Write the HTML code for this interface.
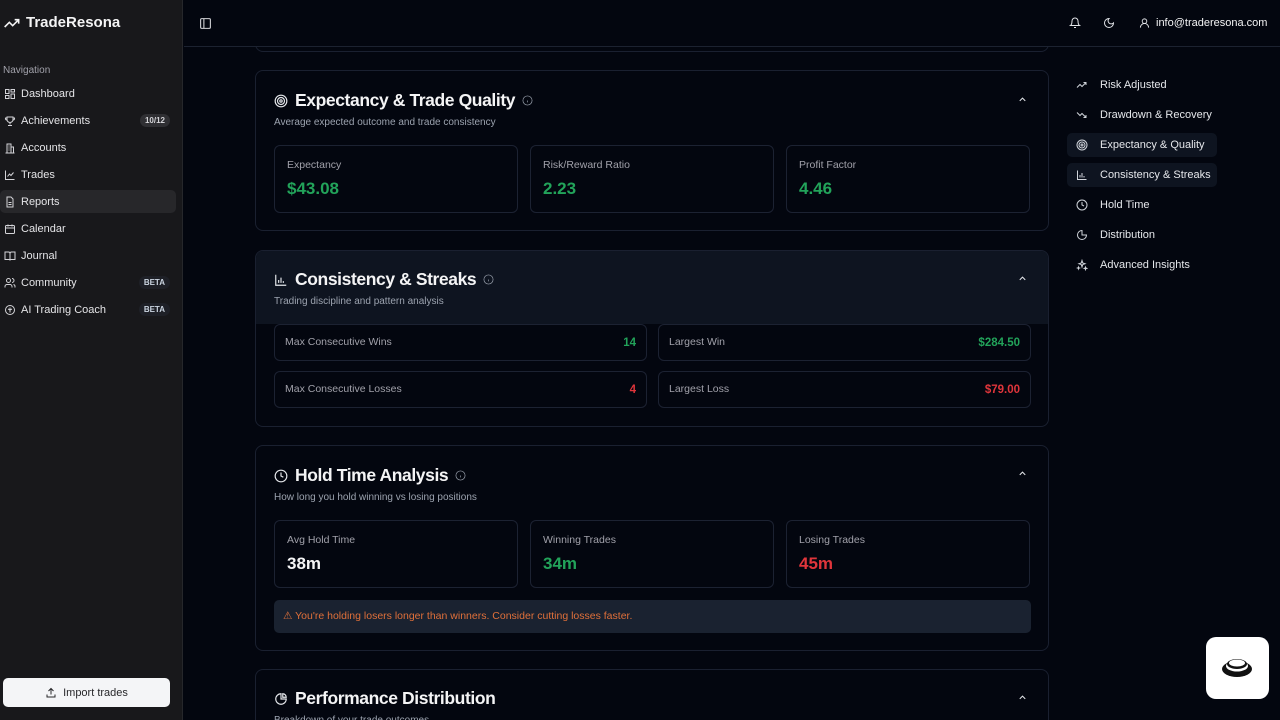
<!DOCTYPE html>
<html><head><meta charset="utf-8"><style>
*{box-sizing:border-box;margin:0;padding:0}
html{width:1280px;height:720px;overflow:hidden}
body{width:1280px;height:720px;overflow:hidden;background:#03060f;font-family:"Liberation Sans",sans-serif;color:#e8eaee;position:relative}
.abs{position:absolute}
.sb{left:0;top:0;width:183px;height:720px;background:#18181b;border-right:1px solid #26272b}
.logo{left:4px;top:14px;font-size:15px;font-weight:bold;color:#f4f4f5;display:flex;align-items:center;gap:6px}
.navh{left:3px;top:65px;font-size:10px;color:#a1a1aa}
.ni{left:0;width:176px;height:23px;display:flex;align-items:center;font-size:11px;color:#e4e4e7;padding-left:4px;border-radius:5px}
.ni svg{width:12px;height:12px;margin-right:5px;stroke:#d4d4d8;fill:none;stroke-width:2}
.ni.act{background:#27272a}
.badge{position:absolute;right:6px;font-size:8px;font-weight:bold;background:#2f2f33;color:#d4d4d8;padding:2px 5px;border-radius:8px}
.beta{background:#1e2027;color:#cbd5e1}
.imp{left:3px;top:678px;width:167px;height:29px;background:#f4f5f7;border-radius:5px;color:#27272a;font-size:11px;display:flex;align-items:center;justify-content:center;gap:6px}
.top{left:184px;top:0;width:1096px;height:47px;border-bottom:1px solid #1c2230;background:#03060f;z-index:2}
.card{left:255px;width:794px;border:1px solid #1a2030;border-radius:8px;background:#03060f}
.title{font-size:17.5px;font-weight:bold;color:#f4f4f5;display:flex;align-items:center;gap:7px;letter-spacing:-.4px}
.sub{font-size:10px;color:#9ca3af;margin-top:6px}
.ic{width:14px;height:14px;stroke:#e5e7eb;fill:none;stroke-width:2}
.info{width:11px;height:11px;stroke:#9ca3af;fill:none;stroke-width:1.5}
.chev{position:absolute;right:20px;width:11px;height:11px;stroke:#e5e7eb;fill:none;stroke-width:2.2}
.st{position:absolute;border:1px solid #1c2232;border-radius:6px;background:#03060f}
.st .l{position:absolute;left:12px;top:13px;font-size:10.5px;color:#a1a1aa}
.st .v{position:absolute;left:12px;top:33px;font-size:17px;font-weight:bold}
.g{color:#22a35a}.r{color:#e0353b}
.row{position:absolute;border:1px solid #1c2232;border-radius:6px;height:37px}
.row .l{position:absolute;left:10px;top:11px;font-size:10.5px;color:#a1a1aa}
.row .v{position:absolute;right:10px;top:12px;font-size:11.5px;font-weight:bold}
.rn{left:1067px;width:150px;height:24px;display:flex;align-items:center;font-size:11px;color:#e5e7eb;padding-left:9px;border-radius:5px}
.rn svg{width:12px;height:12px;stroke:#d1d5db;fill:none;stroke-width:2;margin-right:12px}
.rn.a{background:#0e1420}
</style></head><body>
<div class="abs sb"></div>
<div class="abs logo"><svg width="16" height="12" viewBox="0 0 24 16" fill="none" stroke="#f4f4f5" stroke-width="2.4"><path d="M1 14l7-7 5 5 9-9M16 3h6v6"/></svg>TradeResona</div>
<div class="abs navh">Navigation</div>
<div class="abs ni" style="top:82px"><svg viewBox="0 0 24 24"><rect x="3" y="3" width="7" height="8"/><rect x="14" y="3" width="7" height="5"/><rect x="14" y="12" width="7" height="9"/><rect x="3" y="15" width="7" height="6"/></svg>Dashboard</div>
<div class="abs ni" style="top:109px"><svg viewBox="0 0 24 24"><path d="M6 4h12v5a6 6 0 0 1-12 0zM6 6H3a3 3 0 0 0 3 4M18 6h3a3 3 0 0 1-3 4M12 15v4M8 21h8"/></svg>Achievements<span class="badge">10/12</span></div>
<div class="abs ni" style="top:136px"><svg viewBox="0 0 24 24"><path d="M6 22V4h8v18M14 10h5v12M3 22h18M9 8h2M9 12h2M9 16h2"/></svg>Accounts</div>
<div class="abs ni" style="top:163px"><svg viewBox="0 0 24 24"><path d="M3 3v18h18M7 15l4-5 3 3 5-6"/></svg>Trades</div>
<div class="abs ni act" style="top:190px"><svg viewBox="0 0 24 24"><path d="M14 2H6v20h12V6zM9 13h6M9 17h6"/></svg>Reports</div>
<div class="abs ni" style="top:217px"><svg viewBox="0 0 24 24"><rect x="3" y="5" width="18" height="16" rx="2"/><path d="M3 10h18M8 3v4M16 3v4"/></svg>Calendar</div>
<div class="abs ni" style="top:244px"><svg viewBox="0 0 24 24"><path d="M2 4h7a3 3 0 0 1 3 3v14a2 2 0 0 0-2-2H2zM22 4h-7a3 3 0 0 0-3 3v14a2 2 0 0 1 2-2h8z"/></svg>Journal</div>
<div class="abs ni" style="top:271px"><svg viewBox="0 0 24 24"><circle cx="9" cy="7" r="4"/><path d="M2 21v-2a4 4 0 0 1 4-4h6a4 4 0 0 1 4 4v2M16 3a4 4 0 0 1 0 8M22 21v-2a4 4 0 0 0-3-4"/></svg>Community<span class="badge beta">BETA</span></div>
<div class="abs ni" style="top:298px"><svg viewBox="0 0 24 24"><circle cx="12" cy="12" r="9"/><path d="M12 7v10M8 10l4 2 4-2"/></svg>AI Trading Coach<span class="badge beta">BETA</span></div>
<div class="abs imp"><svg width="12" height="12" viewBox="0 0 24 24" fill="none" stroke="#27272a" stroke-width="2"><path d="M4 15v5h16v-5M12 3v12M7 8l5-5 5 5"/></svg>Import trades</div>

<div class="abs card" style="top:-10px;height:62px"></div>
<div class="abs top"></div>
<svg class="abs" style="left:199px;top:17px;z-index:3" width="13" height="13" viewBox="0 0 24 24" fill="none" stroke="#d4d4d8" stroke-width="2"><rect x="3" y="3" width="18" height="18" rx="2"/><path d="M9 3v18"/></svg>
<svg class="abs" style="left:1069px;top:17px;z-index:3" width="12" height="12" viewBox="0 0 24 24" fill="none" stroke="#e5e7eb" stroke-width="2"><path d="M6 8a6 6 0 0 1 12 0c0 7 3 9 3 9H3s3-2 3-9M10 21h4"/></svg>
<svg class="abs" style="left:1103px;top:17px;z-index:3" width="12" height="12" viewBox="0 0 24 24" fill="none" stroke="#e5e7eb" stroke-width="2"><path d="M12 3a6 6 0 0 0 9 9 9 9 0 1 1-9-9z"/></svg>
<svg class="abs" style="left:1139px;top:17px;z-index:3" width="11" height="12" viewBox="0 0 24 24" fill="none" stroke="#e5e7eb" stroke-width="2"><circle cx="12" cy="8" r="5"/><path d="M3 22a9 9 0 0 1 18 0"/></svg>
<div class="abs" style="left:1156px;top:17px;font-size:11px;color:#f4f4f5;z-index:3">info@traderesona.com</div>

<div class="abs card" style="top:70px;height:161px">
<div class="abs" style="left:18px;top:19px"><div class="title"><svg class="ic" viewBox="0 0 24 24"><circle cx="12" cy="12" r="10"/><circle cx="12" cy="12" r="6"/><circle cx="12" cy="12" r="2"/></svg>Expectancy &amp; Trade Quality<svg class="info" viewBox="0 0 24 24"><circle cx="12" cy="12" r="10"/><path d="M12 16v-4M12 8h0"/></svg></div><div class="sub">Average expected outcome and trade consistency</div></div>
<svg class="chev" style="top:23px" viewBox="0 0 24 24"><path d="M6 15l6-6 6 6"/></svg>
<div class="st" style="left:18px;top:74px;width:244px;height:68px"><div class="l">Expectancy</div><div class="v g">$43.08</div></div>
<div class="st" style="left:274px;top:74px;width:244px;height:68px"><div class="l">Risk/Reward Ratio</div><div class="v g">2.23</div></div>
<div class="st" style="left:530px;top:74px;width:244px;height:68px"><div class="l">Profit Factor</div><div class="v g">4.46</div></div>
</div>

<div class="abs card" style="top:250px;height:177px;overflow:hidden">
<div class="abs" style="left:0;top:0;width:794px;height:73px;background:#0e1420"></div>
<div class="abs" style="left:18px;top:18px"><div class="title"><svg class="ic" viewBox="0 0 24 24"><path d="M3 3v18h18M8 17v-5M12 17V8M16 17v-3"/></svg>Consistency &amp; Streaks<svg class="info" viewBox="0 0 24 24"><circle cx="12" cy="12" r="10"/><path d="M12 16v-4M12 8h0"/></svg></div><div class="sub">Trading discipline and pattern analysis</div></div>
<svg class="chev" style="top:22px" viewBox="0 0 24 24"><path d="M6 15l6-6 6 6"/></svg>
<div class="row" style="left:18px;top:73px;width:373px"><div class="l">Max Consecutive Wins</div><div class="v g">14</div></div>
<div class="row" style="left:402px;top:73px;width:373px"><div class="l">Largest Win</div><div class="v g">$284.50</div></div>
<div class="row" style="left:18px;top:120px;width:373px"><div class="l">Max Consecutive Losses</div><div class="v r">4</div></div>
<div class="row" style="left:402px;top:120px;width:373px"><div class="l">Largest Loss</div><div class="v r">$79.00</div></div>
</div>

<div class="abs card" style="top:445px;height:206px">
<div class="abs" style="left:18px;top:19px"><div class="title"><svg class="ic" viewBox="0 0 24 24"><circle cx="12" cy="12" r="10"/><path d="M12 6v6l4 2"/></svg>Hold Time Analysis<svg class="info" viewBox="0 0 24 24"><circle cx="12" cy="12" r="10"/><path d="M12 16v-4M12 8h0"/></svg></div><div class="sub">How long you hold winning vs losing positions</div></div>
<svg class="chev" style="top:22px" viewBox="0 0 24 24"><path d="M6 15l6-6 6 6"/></svg>
<div class="st" style="left:18px;top:74px;width:244px;height:68px"><div class="l">Avg Hold Time</div><div class="v" style="color:#f4f4f5">38m</div></div>
<div class="st" style="left:274px;top:74px;width:244px;height:68px"><div class="l">Winning Trades</div><div class="v g">34m</div></div>
<div class="st" style="left:530px;top:74px;width:244px;height:68px"><div class="l">Losing Trades</div><div class="v r">45m</div></div>
<div class="abs" style="left:18px;top:154px;width:757px;height:33px;background:#1a2230;border-radius:5px;font-size:10.5px;color:#e0703a;padding:10px 0 0 9px">⚠ You're holding losers longer than winners. Consider cutting losses faster.</div>
</div>

<div class="abs card" style="top:669px;height:51px;border-bottom:none;border-radius:8px 8px 0 0;overflow:hidden">
<div class="abs" style="left:18px;top:18px"><div class="title"><svg class="ic" viewBox="0 0 24 24"><path d="M21 12A9 9 0 1 1 12 3v9z"/><path d="M15 3a6 6 0 0 1 6 6h-6z"/></svg>Performance Distribution</div><div class="sub">Breakdown of your trade outcomes</div></div>
<svg class="chev" style="top:22px" viewBox="0 0 24 24"><path d="M6 15l6-6 6 6"/></svg>
</div>

<div class="abs rn" style="top:73px"><svg viewBox="0 0 24 24"><path d="M2 17l6-6 4 4 8-8M15 7h5v5"/></svg>Risk Adjusted</div>
<div class="abs rn" style="top:103px"><svg viewBox="0 0 24 24"><path d="M2 7l6 6 4-4 8 8M15 17h5v-5"/></svg>Drawdown &amp; Recovery</div>
<div class="abs rn a" style="top:133px"><svg viewBox="0 0 24 24"><circle cx="12" cy="12" r="10"/><circle cx="12" cy="12" r="6"/><circle cx="12" cy="12" r="2"/></svg>Expectancy &amp; Quality</div>
<div class="abs rn a" style="top:163px"><svg viewBox="0 0 24 24"><path d="M3 3v18h18M8 17v-5M12 17V8M16 17v-3"/></svg>Consistency &amp; Streaks</div>
<div class="abs rn" style="top:193px"><svg viewBox="0 0 24 24"><circle cx="12" cy="12" r="10"/><path d="M12 6v6l4 2"/></svg>Hold Time</div>
<div class="abs rn" style="top:223px"><svg viewBox="0 0 24 24"><path d="M21 12A9 9 0 1 1 12 3v9z"/></svg>Distribution</div>
<div class="abs rn" style="top:253px"><svg viewBox="0 0 24 24"><path d="M12 3l1.5 5L18 9.5 13.5 11 12 16l-1.5-5L6 9.5 10.5 8zM19 16l.7 2 2 .7-2 .7-.7 2-.7-2-2-.7 2-.7zM5 16l.5 1.5L7 18l-1.5.5L5 20l-.5-1.5L3 18l1.5-.5z"/></svg>Advanced Insights</div>

<div class="abs" style="left:1206px;top:637px;width:63px;height:62px;background:#fff;border-radius:10px"></div>
<svg class="abs" style="left:1220px;top:654px" width="34" height="26" viewBox="0 0 34 26"><ellipse cx="17" cy="15" rx="15" ry="8" fill="#111"/><ellipse cx="17" cy="12" rx="11" ry="5.5" fill="#fff"/><ellipse cx="17" cy="10" rx="10" ry="5" fill="#111"/><ellipse cx="17" cy="9" rx="8" ry="3.5" fill="#fff"/></svg>
</body></html>
